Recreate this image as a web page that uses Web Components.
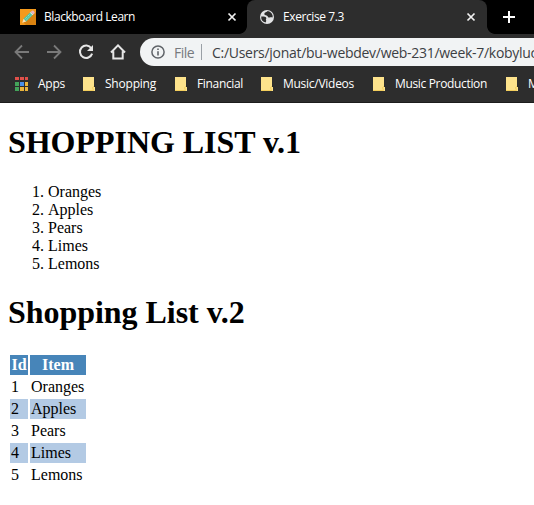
<!DOCTYPE html>
<html lang="en">
<head>
<meta charset="utf-8">
<title>Exercise 7.3</title>
<style>
html,body{margin:0;background:#fff;overflow:hidden}
</style>
</head>
<body>
<browser-window></browser-window>
<script>
const define = (name, html, ready) => customElements.define(name, class extends HTMLElement {
  connectedCallback() {
    if (this.shadowRoot) return;
    const t = document.createElement('template');
    t.innerHTML = html;
    this.attachShadow({mode: 'open'}).append(t.content.cloneNode(true));
    if (ready) ready.call(this, this.shadowRoot);
  }
});

// Text whose tracking is set so that it takes up the width given in "w".
define('fit-text', `<style>:host{display:inline-block;white-space:nowrap;flex:none}span{display:inline-block}</style><span></span>`, function (root) {
  const s = root.querySelector('span'), text = this.getAttribute('text'), w = +this.getAttribute('w');
  s.textContent = text;
  this.style.width = w + 'px';
  s.style.letterSpacing = (w - s.getBoundingClientRect().width) / text.length + 'px';
});

const icons = {
  pencil: `<svg width="16" height="16"><rect width="16" height="16" fill="#f59a1c"/><path d="M16 3V16H6L3 13Z" fill="#d98210"/><path d="M2.3 13.8 3.5 9.8 6.3 12.5Z" fill="#f6e3bd"/><path d="M3.5 9.8 10.6 2.9 13.3 5.6 6.3 12.5Z" fill="#4fc3a1"/><path d="M4.6 10.4 11.4 3.8M5.7 11.7 12.5 5" stroke="#b9ead5" stroke-width=".8" stroke-dasharray="1.3 1"/><path d="M10.6 2.9 12 1.7Q13.1 1.3 14.1 2.4T14.4 4.4L13.3 5.6Z" fill="#e9b4c4"/><path d="M10.2 3.3 12.9 6" stroke="#dcebf0"/></svg>`,
  globe: `<svg width="16" height="16" viewBox="0 0 16 16"><circle cx="8" cy="8" r="7" fill="#e2e3e5"/><path d="M8.8 2.1C7.6 3.3 5.6 3.3 5.3 4.8 5.1 6.2 6.7 6 7.6 6.4 9.1 6.8 8.5 8.3 9.8 8.5 11.2 8.8 12 8.1 13.7 8.5A5.8 5.8 0 0 0 8.8 2.1Z" fill="#2d2d2d"/><path d="M2.2 7.5C4 7.4 6.4 7.3 7.2 8.7 7.7 9.8 6.4 10.3 7.1 11.2 7.5 11.8 6.9 12.6 6.7 13.6A5.9 5.9 0 0 1 2.2 7.5Z" fill="#2d2d2d"/></svg>`,
  close: `<svg width="10" height="10"><path d="M1.5 1.5 8.5 8.5M8.5 1.5 1.5 8.5" stroke="#f1f1f1" stroke-width="1.7"/></svg>`,
  plus: `<svg width="12" height="12"><path d="M6 0V12M0 6H12" stroke="#fff" stroke-width="2"/></svg>`,
  back: `<svg width="16" height="16"><path d="M15 8H2M8 1.5 1.5 8 8 14.5" fill="none" stroke="#7a7a7a" stroke-width="1.8"/></svg>`,
  forward: `<svg width="16" height="16"><path d="M1 8H14M8 1.5 14.5 8 8 14.5" fill="none" stroke="#7a7a7a" stroke-width="1.8"/></svg>`,
  reload: `<svg width="16" height="16"><path d="M13.3 4.2A6.2 6.2 0 1 0 14.1 9.6" fill="none" stroke="#e6e6e6" stroke-width="2"/><path d="M15 .9V6.9H9Z" fill="#e6e6e6"/></svg>`,
  home: `<svg width="16" height="16"><path d="M1 8.5 8 1.4 15 8.5M3.3 7.2V14.4H12.7V7.2" fill="none" stroke="#e6e6e6" stroke-width="2"/></svg>`,
  info: `<svg width="14" height="14"><circle cx="7" cy="7" r="6.1" fill="none" stroke="#5f6368" stroke-width="1.5"/><path d="M7 6.2V10.5M7 3.5V5" stroke="#5f6368" stroke-width="1.6"/></svg>`,
  folder: `<svg width="12" height="14"><path d="M0 0H11V10H12V14H0Z" fill="#fde38c"/><path d="M0 13.5H10.5L9.5 10.5 11 9.5" fill="none" stroke="#f3ce5c"/></svg>`,
  apps: `<svg width="14" height="14"><path d="M0 1.5H4M5 1.5H9M10 1.5H13" stroke="#e0504a" stroke-width="3"/><path d="M0 7H4" stroke="#43a45a" stroke-width="4"/><path d="M5 7H9" stroke="#4a90ea" stroke-width="4"/><path d="M10 7H13" stroke="#eab43c" stroke-width="4"/><path d="M0 12H4" stroke="#43a45a" stroke-width="4"/><path d="M5 12H9M10 12H13" stroke="#eab43c" stroke-width="4"/></svg>`
};
define('ui-icon', `<style>:host{display:block;flex:none}svg{display:block}</style>`, function (root) {
  root.innerHTML += icons[this.getAttribute('name')];
});

define('browser-tab', `<style>
:host{display:flex;align-items:center;box-sizing:border-box;height:34px;flex:none;position:relative;color:#fff}
:host([active]){background:#2d2d2d;border-radius:8px 8px 0 0}
:host([active])::before,:host([active])::after{content:"";position:absolute;bottom:0;width:8px;height:8px}
:host([active])::before{left:-8px;background:radial-gradient(circle at 0 0,#000 7.5px,#2d2d2d 8.2px)}
:host([active])::after{right:-8px;background:radial-gradient(circle at 100% 0,#000 7.5px,#2d2d2d 8.2px)}
</style><slot></slot>`);

define('tab-strip', `<style>
:host{display:flex;height:34px;background:#000;font:500 12px/34px "Open Sans","Noto Sans",sans-serif}
.one{width:247px;padding:0 10px 0 20px}
.two{width:240px;padding:0 11px 0 12px}
.label{margin-left:8px}
.x{margin-left:auto}
.plus{margin:11px 0 0 16px}
</style>
<browser-tab class="one"><ui-icon name="pencil"></ui-icon><fit-text class="label" text="Blackboard Learn" w="91"></fit-text><ui-icon class="x" name="close"></ui-icon></browser-tab>
<browser-tab class="two" active><ui-icon name="globe"></ui-icon><fit-text class="label" text="Exercise 7.3" w="61"></fit-text><ui-icon class="x" name="close"></ui-icon></browser-tab>
<ui-icon class="plus" name="plus"></ui-icon>`);

define('nav-bar', `<style>
:host{display:flex;align-items:center;height:36px;padding-left:14px;gap:16px;background:#2d2d2d}
.url{display:flex;align-items:center;flex:1;height:28px;margin-left:-2px;padding-left:11px;background:#f1f3f4;border-radius:14px 0 0 14px;overflow:hidden;font:14px/27px "Open Sans","Noto Sans",sans-serif;color:#3c4043}
.file{margin-left:9px;color:#777a7e}
.bar{flex:none;width:1px;height:16px;margin:0 10px 0 7px;background:#9aa0a6}
</style>
<ui-icon name="back"></ui-icon><ui-icon name="forward"></ui-icon><ui-icon name="reload"></ui-icon><ui-icon name="home"></ui-icon>
<div class="url"><ui-icon name="info"></ui-icon><fit-text class="file" text="File" w="20"></fit-text><i class="bar"></i><fit-text text="C:/Users/jonat/bu-webdev/web-231/week-7/kobyluc" w="325"></fit-text></div>`);

define('book-mark', `<style>:host{display:flex;align-items:center;flex:none}</style><slot></slot>`);

define('bookmark-bar', `<style>
:host{display:flex;align-items:center;box-sizing:border-box;height:33px;padding:0 0 4px 15px;overflow:hidden;background:#2d2d2d;border-bottom:1px solid #1d1d1d;color:#fff;font:500 12px/28px "Open Sans","Noto Sans",sans-serif}
fit-text{margin-left:10px}
book-mark{margin-right:19px}
book-mark:first-of-type{margin-right:18px}
book-mark:first-of-type fit-text{margin-left:9px}
book-mark:nth-of-type(3){margin-right:18px}
</style>
<book-mark><ui-icon name="apps"></ui-icon><fit-text text="Apps" w="27"></fit-text></book-mark>
<book-mark><ui-icon name="folder"></ui-icon><fit-text text="Shopping" w="51"></fit-text></book-mark>
<book-mark><ui-icon name="folder"></ui-icon><fit-text text="Financial" w="46"></fit-text></book-mark>
<book-mark><ui-icon name="folder"></ui-icon><fit-text text="Music/Videos" w="71"></fit-text></book-mark>
<book-mark><ui-icon name="folder"></ui-icon><fit-text text="Music Production" w="92"></fit-text></book-mark>
<book-mark><ui-icon name="folder"></ui-icon><fit-text text="M" w="11"></fit-text></book-mark>`);

define('shopping-page', `<style>
:host{display:flow-root;padding:0 8px;color:#000;background:#fff;font:16px "Liberation Serif",serif}
h1{font-size:32px;margin:21.44px 0;letter-spacing:-.04px}
ol{margin:16px 0;padding-left:40px}
table{border-spacing:2px;width:80px;table-layout:fixed}
th{background:#4785b9;color:#fff}
th:first-child{width:16px}
th,td{padding:1px}
tr:nth-child(odd) td{background:#b3cae4}
</style>
<h1>SHOPPING LIST v.1</h1>
<ol><li>Oranges</li><li>Apples</li><li>Pears</li><li>Limes</li><li>Lemons</li></ol>
<h1>Shopping List v.2</h1>
<table><tbody><tr><th>Id</th><th>Item</th></tr><tr><td>1</td><td>Oranges</td></tr><tr><td>2</td><td>Apples</td></tr><tr><td>3</td><td>Pears</td></tr><tr><td>4</td><td>Limes</td></tr><tr><td>5</td><td>Lemons</td></tr></tbody></table>`);

define('browser-window', `<style>:host{display:block;width:534px;height:505px;overflow:hidden;background:#fff}</style>
<tab-strip></tab-strip><nav-bar></nav-bar><bookmark-bar></bookmark-bar><shopping-page></shopping-page>`);
</script>
</body>
</html>
